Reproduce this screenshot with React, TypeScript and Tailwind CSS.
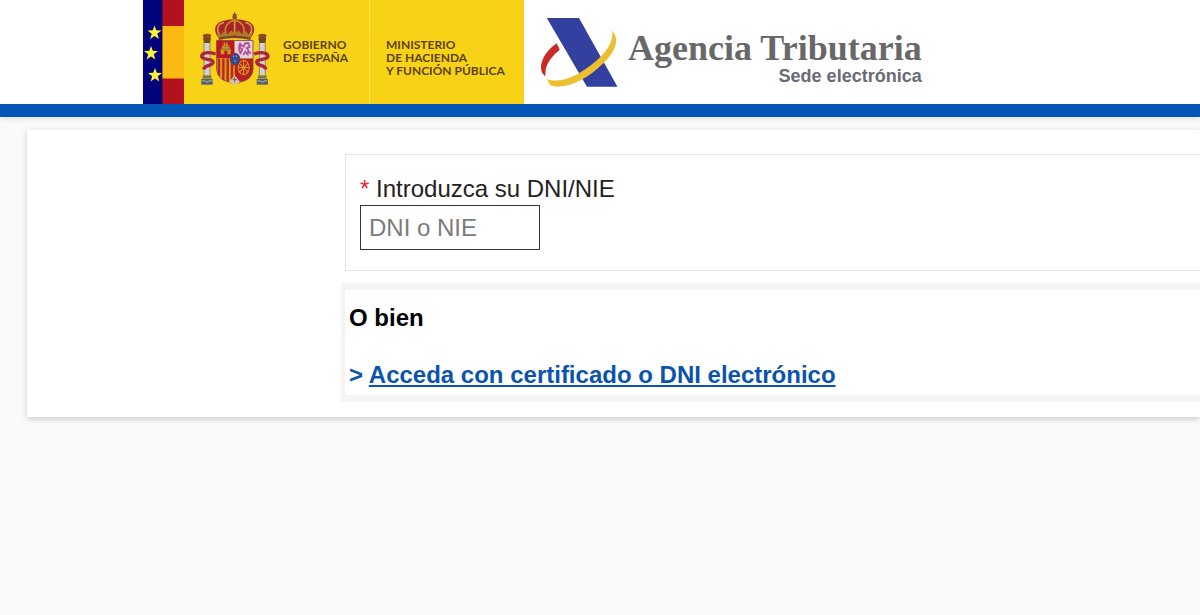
function Star({ x, y }: { x: number; y: number }) {
  return (
    <polygon
      transform={`translate(${x} ${y})`}
      points="0,-7 1.8,-2.2 7,-2 2.8,1.2 4.4,6.4 0,3.4 -4.4,6.4 -2.8,1.2 -7,-2 -1.8,-2.2"
      fill="#fbf13a"
    />
  );
}

function Flags() {
  return (
    <svg viewBox="0 0 41 104" className="h-[104px] w-[41px] shrink-0" aria-hidden="true">
      <rect width="20" height="104" fill="#02027a" />
      <rect x="19.5" width="21.5" height="104" fill="#b3121d" />
      <rect x="19.5" y="26" width="21.5" height="52.5" fill="#fdb913" />
      <Star x={11.5} y={32.5} />
      <Star x={8} y={53} />
      <Star x={12} y={75} />
    </svg>
  );
}

function Pillar({ x }: { x: number }) {
  return (
    <g transform={`translate(${x} 0)`}>
      <path d="M-13 81 Q0 74 13 81 L10 90 H-10Z" fill="#8a4a1c" />
      <path d="M-12 90 H12 L9 106 H-9Z" fill="#6e4a1e" />
      <rect x="-9" y="105" width="18" height="98" fill="#d5d0cb" />
      <path d="M-9 105V203M9 105V203" stroke="#85796f" strokeWidth="2.5" />
      <path d="M-13 202H13V212H-13Z" fill="#7d7a45" />
      <path d="M-17 213H17V230H-17Z" fill="#52616b" />
      <path d="M-15 220q5-5 10 0t10 0t10 0" stroke="#b9c0be" strokeWidth="3" fill="none" />
    </g>
  );
}

function SpanishArms() {
  return (
    <svg viewBox="0 0 240 252" className="h-[84px] w-20 shrink-0" role="img" aria-label="Escudo de España">
      <Pillar x={36} />
      <Pillar x={202} />
      <path d="M62 138C42 132 20 132 20 145S56 150 54 163S30 168 26 184" stroke="#ad2638" strokeWidth="10" fill="none" />
      <path d="M177 138C196 132 219 132 219 145S183 150 185 163S209 168 213 184" stroke="#ad2638" strokeWidth="10" fill="none" />

      <g transform="translate(0 -13)">
        <path d="M71 102 C54 83 57 58 84 52 Q103 45 119 47 Q135 45 154 52 C181 58 184 83 167 102Z" fill="#a92428" />
        <path d="M75 94C61 75 70 59 87 57M95 96C84 73 97 55 119 49M143 96C154 73 141 55 119 49M163 94C177 75 168 59 151 57M119 48V98" stroke="#c38b25" strokeWidth="5" fill="none" />
        <path d="M75 94C61 75 70 59 87 57M163 94C177 75 168 59 151 57M119 48V94" stroke="#eed48a" strokeWidth="2" strokeDasharray="3 4" fill="none" />
        <path d="M65 84 L77 94 L87 82 L98 92 L109 80 L119 91 L130 80 L141 92 L152 82 L162 94 L174 84 L167 108 Q119 99 71 108Z" fill="#b27824" />
        <path d="M72 105Q119 94 166 105" stroke="#79412b" strokeWidth="6" fill="none" />
        <circle cx="91" cy="101" r="3" fill="#27775b" />
        <circle cx="119" cy="98" r="3" fill="#a52035" />
        <circle cx="147" cy="101" r="3" fill="#27775b" />
        <circle cx="119" cy="40" r="7" fill="#80512b" />
        <path d="M119 26V45M113 33H125" stroke="#81502b" strokeWidth="4" />
      </g>

      <g transform="translate(0 -27) scale(1 1.1)">
        <path d="M65 113H119V162H65Z" fill="#bd1820" />
        <path d="M119 113H174V162H119Z" fill="#e0d3da" />
        <path d="M65 162H119V227Q80 227 65 199Z" fill="#dc9c18" />
        <path d="M72 162V209M85 162V221M98 162V225M111 162V227" stroke="#b92625" strokeWidth="7" />
        <path d="M119 162H174V197Q165 227 119 227Z" fill="#b91e20" />
        <path d="M65 113H174V191Q170 222 137 226L119 232L102 226Q69 222 65 191Z" stroke="#854045" strokeWidth="2.5" fill="none" />
        <path d="M77 151V136H81V127H86V118H90V124H94V118H98V127H103V136H107V151H97V141H88V151Z" fill="#c99a25" />
        <path d="M80 137H105M84 129H101" stroke="#80641f" strokeWidth="2" />
        <path d="M136 150L142 137L134 133L138 125L146 130L150 121L160 120L164 130L155 134L160 139L158 151L151 144L145 153M136 148Q128 133 136 119M158 140L168 149" stroke="#b64e9b" strokeWidth="5" fill="none" />
        <ellipse cx="146" cy="187" rx="16" ry="19" stroke="#d4a127" strokeWidth="4" strokeDasharray="5 2" fill="none" />
        <path d="M132 174L160 201M160 174L132 201M146 168V207M130 187H162" stroke="#d69d26" strokeWidth="3" />
        <path d="M103 226L119 208L135 226L119 235Z" fill="#d3c8b6" />
        <path d="M119 213V228M113 221Q119 216 125 221" stroke="#8d5961" strokeWidth="3" fill="none" />
        <ellipse cx="120" cy="164" rx="14" ry="16" fill="#2d4e9c" stroke="#873149" strokeWidth="3" />
        <path d="M114 156h3M123 156h3M118 169h4" stroke="#c8ae62" strokeWidth="4" />
      </g>
    </svg>
  );
}

function AgencyMark() {
  return (
    <svg viewBox="30 43 240 220" className="h-[73px] w-20 shrink-0" aria-hidden="true">
      <path d="M50 52H147L263 259H171Z" fill="#3340a0" />
      <path d="M80 128L89 148C68 165 53 184 47 205L45 228L36 218C24 190 44 152 80 128Z" fill="#c92a27" />
      <path d="M247 90C269 116 260 149 222 187C170 239 103 271 60 254L50 236C91 252 147 225 191 188C229 156 252 125 247 90Z" fill="#ecbf2e" />
    </svg>
  );
}

function Header() {
  return (
    <header className="border-b-[13px] border-[#0356b3] bg-white shadow-[0_2px_6px_rgba(0,0,0,0.1)]">
      <div className="flex h-[104px] pl-[143px]">
        <div className="flex shrink-0 bg-[#f8d217] font-['Lato',sans-serif] text-[12px] leading-[13px] font-bold text-[#5b4308]">
          <Flags />
          <div className="flex w-[186px] border-r border-[#fae04f] pt-2 pl-[11px]">
            <SpanishArms />
            <p className="pt-[30px] pl-2 whitespace-nowrap">
              GOBIERNO
              <br />
              DE ESPAÑA
            </p>
          </div>
          <p className="w-[154px] pt-[38px] pl-4 whitespace-nowrap">
            MINISTERIO
            <br />
            DE HACIENDA
            <br />
            Y FUNCIÓN PÚBLICA
          </p>
        </div>
        <a href="#inicio" className="flex shrink-0 pt-[15px] pl-4">
          <AgencyMark />
          <span className="flex flex-col items-end pt-[14px] pl-2 whitespace-nowrap">
            <span className="font-['Liberation_Serif',serif] text-[36px] leading-[38px] font-bold text-[#686868]">Agencia Tributaria</span>
            <span className="font-['Liberation_Sans',sans-serif] text-[18px] leading-[18px] font-bold text-[#686b75]">
              Sede electrónica
            </span>
          </span>
        </a>
      </div>
    </header>
  );
}

export default function App() {
  return (
    <div className="min-h-screen overflow-x-hidden bg-[#fafafa] font-['Liberation_Sans',Arial,sans-serif] text-[24px] text-[#222222]">
      <Header />
      <main className="mt-[13px] ml-[27px] bg-white pt-6 pb-[15px] pl-[314px] shadow-[0_2px_6px_rgba(0,0,0,0.2)]">
        <form className="ml-1 border border-r-0 border-[#e4e4e4] px-[14px] pt-[18px] pb-5">
          <label htmlFor="dni" className="block leading-8">
            <span className="text-[#ee2737]">*</span> Introduzca su DNI/NIE
          </label>
          <input
            id="dni"
            type="text"
            required
            placeholder="DNI o NIE"
            className="block h-[45px] w-[180px] border border-[#333338] bg-white px-2 placeholder:text-[#7b7b7b]"
          />
        </form>
        <section className="mt-3 border-y-[7px] border-l-4 border-[#f4f4f4] px-1 pt-3 pb-1 font-bold">
          <h2 className="leading-8 text-black">O bien</h2>
          <p className="mt-[25px] leading-8 text-[#0b54ad]">
            &gt;{" "}
            <a href="#certificado" className="underline decoration-2 underline-offset-2">
              Acceda con certificado o DNI electrónico
            </a>
          </p>
        </section>
      </main>
    </div>
  );
}
